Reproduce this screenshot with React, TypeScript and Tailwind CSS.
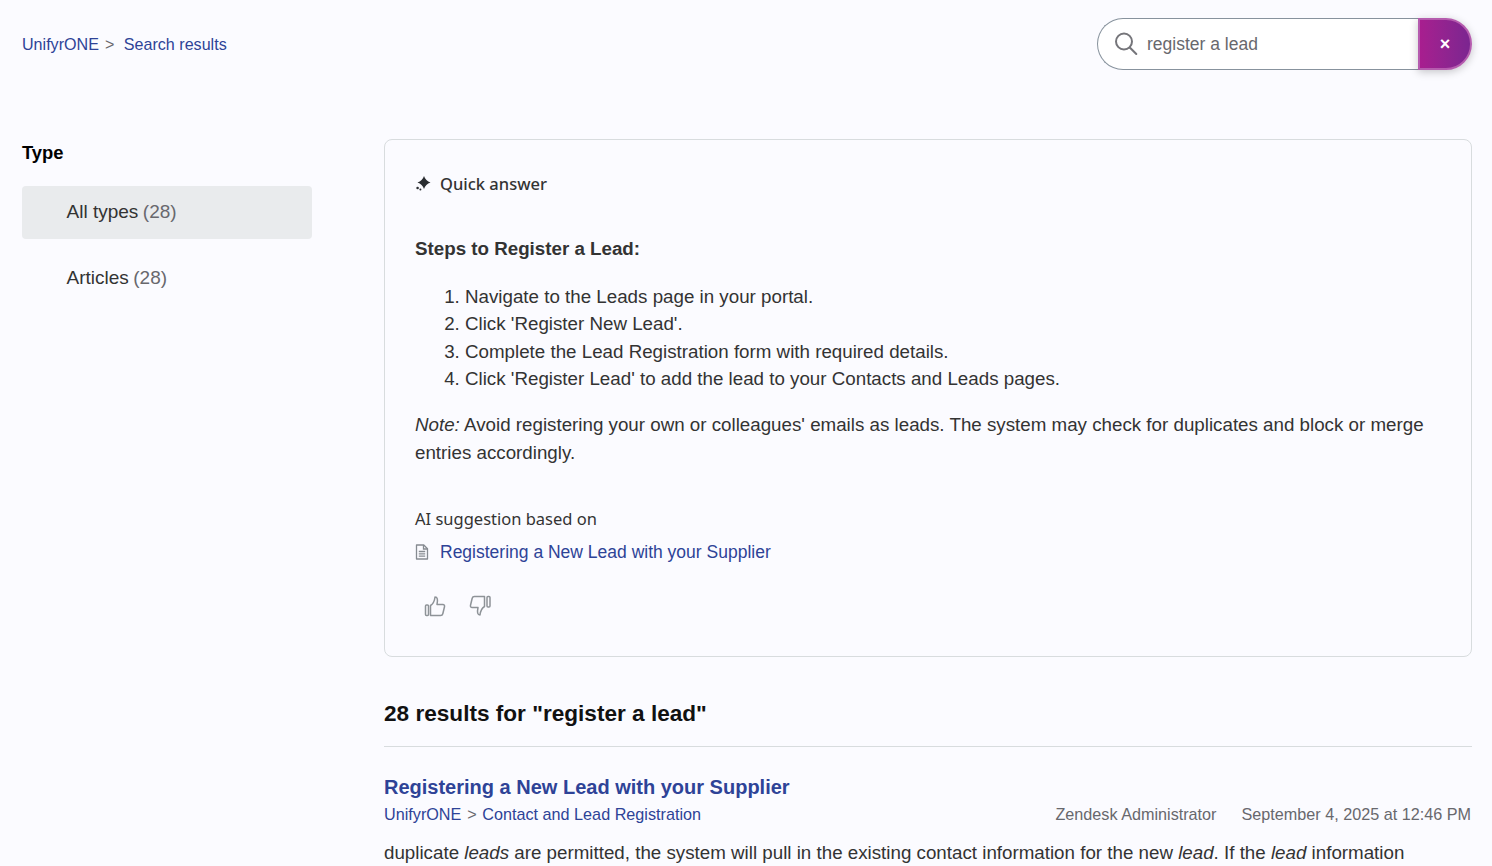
const sans = "font-['Liberation_Sans',Arial,sans-serif]"

function SearchIcon() {
  return (
    <svg width="24" height="24" viewBox="0 0 24 24" fill="none" stroke="#75757a" strokeWidth="2" strokeLinecap="round">
      <circle cx="10" cy="9.500" r="8" />
      <path d="M15.800 15.500l6.500 6.500" />
    </svg>
  )
}

function SparkleIcon() {
  return (
    <svg width="16" height="16" viewBox="0 0 16 16" fill="#2a2d31">
      <path d="M9 0Q10.600 4.900 15.500 6.500 10.600 8.100 9 13 7.400 8.100 2.500 6.500 7.400 4.900 9 0z" />
      <circle cx="2.600" cy="12" r="1.300" />
      <circle cx="5.400" cy="13.400" r="1" />
    </svg>
  )
}

function DocIcon() {
  return (
    <svg width="14" height="16" viewBox="0 0 14 16" fill="none" stroke="#868b91" strokeWidth="1.300">
      <path d="M1.500 1h7.300l3.700 3.700v10.300h-11z" strokeLinejoin="round" />
      <path d="M8.500 1v4h4M3.800 7.500h6.400M3.800 9.800h6.400M3.800 12.100h6.400" />
    </svg>
  )
}

function ThumbUp() {
  return (
    <svg width="22" height="22" viewBox="0 0 22 22" fill="none" stroke="#8e9398" strokeWidth="1.500" strokeLinejoin="round">
      <rect x="1.500" y="10" width="3" height="10.500" rx="1" />
      <path d="M6.500 10.500c2.500-1.500 4-4 4.500-8.500 2.500 0 3 2.500 2 7.500h5.800c1.400 0 2 1 1.700 2.200l-1.700 7c-.3 1.200-1 1.800-2.200 1.800H6.500z" />
    </svg>
  )
}

function ThumbDown() {
  return (
    <svg width="22" height="22" viewBox="0 0 22 22" fill="none" stroke="#8e9398" strokeWidth="1.500" strokeLinejoin="round">
      <rect x="18" y="1.500" width="3" height="10.500" rx="1" />
      <path d="M15.500 11.500c-2.500 1.500-4 4-4.500 8.500-2.500 0-3-2.500-2-7.500H3.200c-1.400 0-2-1-1.700-2.200l1.700-7c.3-1.200 1-1.800 2.200-1.800h10.100z" />
    </svg>
  )
}

export default function App() {
  return (
    <div className={`${sans} h-[866px] overflow-hidden bg-[#fbfbff] pl-[22px] pr-[20px] text-[#333333]`}>
      <header className="flex h-[89px] items-start justify-between pt-[18px]">
        <nav className="flex h-[52px] items-center pt-[1px] text-[16.100px] text-[#2e4397]">
          <span>UnifyrONE</span>
          <span className="ml-[6px] mr-[9.500px] text-[#68686d]">&gt;</span>
          <span>Search results</span>
        </nav>
        <div className="flex h-[52px] w-[375px]">
          <div className="flex flex-1 items-center gap-[9px] rounded-l-full border border-r-0 border-[#87929d] bg-white pl-[16px]">
            <SearchIcon />
            <span className="text-[17.500px] text-[#68686d]">register a lead</span>
          </div>
          <div className="flex w-[54px] items-center justify-center rounded-r-full border-2 border-[#b55cae] bg-gradient-to-r from-[#a81e8f] to-[#7b2590] text-[18px] font-bold text-white shadow-[0_2px_8px_rgba(0,0,0,0.22)]">
            ×
          </div>
        </div>
      </header>

      <div className="flex">
        <aside className="w-[362px] shrink-0">
          <h2 className="mt-[52px] text-[18.400px] leading-[24px] font-bold text-black">Type</h2>
          <ul className="mt-[21px] flex w-[290px] flex-col gap-[13px] text-[19px]">
            <li className="flex h-[53px] items-center rounded-[4px] bg-[#e9ebed] pl-[44.500px]">
              All types<span className="ml-[4.500px] text-[#68686d]">(28)</span>
            </li>
            <li className="flex h-[53px] items-center pl-[44.500px]">
              Articles<span className="ml-[4.500px] text-[#68686d]">(28)</span>
            </li>
          </ul>
        </aside>

        <main className="min-w-0 flex-1 pt-[50px]">
          <section className="h-[518px] rounded-[8px] border border-[#d8dcde] px-[30px] pt-[32px]">
            <div className="flex items-center gap-[9px] font-['Noto_Sans',sans-serif] text-[16.500px] leading-[24px] font-medium">
              <SparkleIcon />
              <span>Quick answer</span>
            </div>
            <h3 className="mt-[39px] text-[18.750px] leading-[27px] font-bold">Steps to Register a Lead:</h3>
            <ol className="mt-[21px] list-decimal pl-[50px] text-[18.750px] leading-[27.300px]">
              <li>Navigate to the Leads page in your portal.</li>
              <li>Click 'Register New Lead'.</li>
              <li>Complete the Lead Registration form with required details.</li>
              <li>Click 'Register Lead' to add the lead to your Contacts and Leads pages.</li>
            </ol>
            <p className="mt-[19px] text-[18.750px] leading-[28px]">
              <em>Note:</em> Avoid registering your own or colleagues' emails as leads. The system may check for duplicates and block or merge entries accordingly.
            </p>
            <p className="mt-[40px] font-['Noto_Sans',sans-serif] text-[16.500px] leading-[24px]">AI suggestion based on</p>
            <div className="mt-[9px] flex items-center gap-[11px] text-[17.500px] leading-[24px] text-[#2e4397]">
              <DocIcon />
              <span>Registering a New Lead with your Supplier</span>
            </div>
            <div className="mt-[31px] flex gap-[23px] pl-[9px]">
              <ThumbUp />
              <ThumbDown />
            </div>
          </section>

          <h2 className="mt-[41px] text-[22.600px] leading-[32px] font-bold text-[#111111]">28 results for "register a lead"</h2>
          <hr className="mt-[16px] border-[#d8dcde]" />
          <h3 className="mt-[26px] text-[20px] leading-[28px] font-bold text-[#2e4397]">Registering a New Lead with your Supplier</h3>
          <div className="mt-[1px] flex justify-between pr-[1px] text-[16.200px] leading-[24px]">
            <div className="text-[#2e4397]">
              UnifyrONE<span className="ml-[6px] mr-[5.500px] text-[#68686d]">&gt;</span>Contact and Lead Registration
            </div>
            <div className="flex gap-[25px] text-[#68686d]">
              <span>Zendesk Administrator</span>
              <span>September 4, 2025 at 12:46 PM</span>
            </div>
          </div>
          <p className="mt-[13px] text-[18.750px] leading-[28px]">
            duplicate <em>leads</em> are permitted, the system will pull in the existing contact information for the new <em>lead</em>. If the <em>lead</em> information
          </p>
        </main>
      </div>
    </div>
  )
}
